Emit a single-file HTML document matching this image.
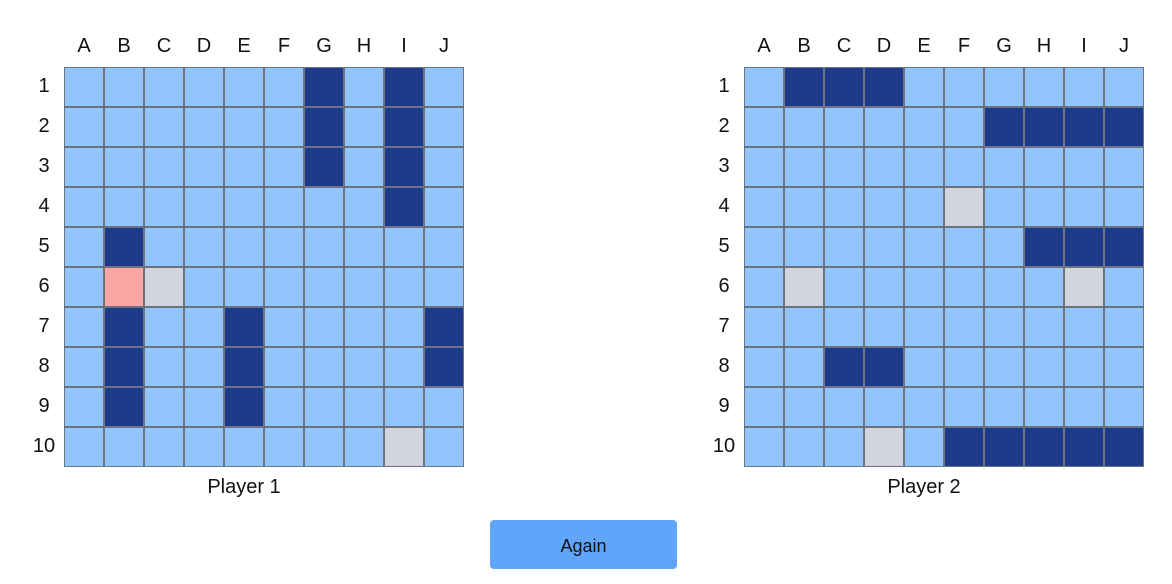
<!DOCTYPE html>
<html><head><style>
body{margin:0;width:1172px;height:584px;background:#fff;font-family:"Liberation Sans",sans-serif;color:#111;position:relative;overflow:hidden}
.board{position:absolute;top:0}
.grid{position:absolute;top:67px;width:400px;height:400px;display:grid;grid-template-columns:repeat(10,40px);grid-template-rows:repeat(10,40px);}
.grid div{box-sizing:border-box;border:1px solid #6b7280;background:#93c5fd;width:40px;height:40px}
.grid div.s{background:#1e3a8a}.grid div.r{background:#fca5a5}.grid div.g{background:#d1d5db}
.col{position:absolute;top:35px;width:40px;text-align:center;font-size:20px}
.row{position:absolute;width:40px;text-align:center;font-size:20px}
.name{position:absolute;top:476px;width:400px;text-align:center;font-size:20px}
.btn{position:absolute;left:490px;top:520px;width:187px;height:49px;background:#60a5fa;border-radius:4px;text-align:center;line-height:52px;font-size:18px;color:#111}
</style></head><body>
<div id="b1" class="board" style="left:0">
<div class="col" style="left:64px">A</div><div class="col" style="left:104px">B</div><div class="col" style="left:144px">C</div><div class="col" style="left:184px">D</div><div class="col" style="left:224px">E</div><div class="col" style="left:264px">F</div><div class="col" style="left:304px">G</div><div class="col" style="left:344px">H</div><div class="col" style="left:384px">I</div><div class="col" style="left:424px">J</div>
<div class="row" style="left:24px;top:75px">1</div><div class="row" style="left:24px;top:115px">2</div><div class="row" style="left:24px;top:155px">3</div><div class="row" style="left:24px;top:195px">4</div><div class="row" style="left:24px;top:235px">5</div><div class="row" style="left:24px;top:275px">6</div><div class="row" style="left:24px;top:315px">7</div><div class="row" style="left:24px;top:355px">8</div><div class="row" style="left:24px;top:395px">9</div><div class="row" style="left:24px;top:435px">10</div>
<div class="grid" id="g1" style="left:64px"></div>
<div class="name" style="left:44px">Player 1</div>
</div>
<div id="b2" class="board" style="left:680px">
<div class="col" style="left:64px">A</div><div class="col" style="left:104px">B</div><div class="col" style="left:144px">C</div><div class="col" style="left:184px">D</div><div class="col" style="left:224px">E</div><div class="col" style="left:264px">F</div><div class="col" style="left:304px">G</div><div class="col" style="left:344px">H</div><div class="col" style="left:384px">I</div><div class="col" style="left:424px">J</div>
<div class="row" style="left:24px;top:75px">1</div><div class="row" style="left:24px;top:115px">2</div><div class="row" style="left:24px;top:155px">3</div><div class="row" style="left:24px;top:195px">4</div><div class="row" style="left:24px;top:235px">5</div><div class="row" style="left:24px;top:275px">6</div><div class="row" style="left:24px;top:315px">7</div><div class="row" style="left:24px;top:355px">8</div><div class="row" style="left:24px;top:395px">9</div><div class="row" style="left:24px;top:435px">10</div>
<div class="grid" id="g2" style="left:64px"></div>
<div class="name" style="left:44px">Player 2</div>
</div>
<div class="btn">Again</div>
<script>
function build(id,m){var g=document.getElementById(id),h='';for(var r=0;r<10;r++)for(var c=0;c<10;c++){var k=m[r][c];h+='<div class="'+(k=='s'?'s':k=='r'?'r':k=='g'?'g':'')+'"></div>';}g.innerHTML=h;}
build('g1',[
"......s.s.",
"......s.s.",
"......s.s.",
"........s.",
".s........",
".rg.......",
".s..s....s",
".s..s....s",
".s..s.....",
"........g."]);
build('g2',[
".sss......",
"......ssss",
"..........",
".....g....",
".......sss",
".g......g.",
"..........",
"..ss......",
"..........",
"...g.sssss"]);
</script>
</body></html>
